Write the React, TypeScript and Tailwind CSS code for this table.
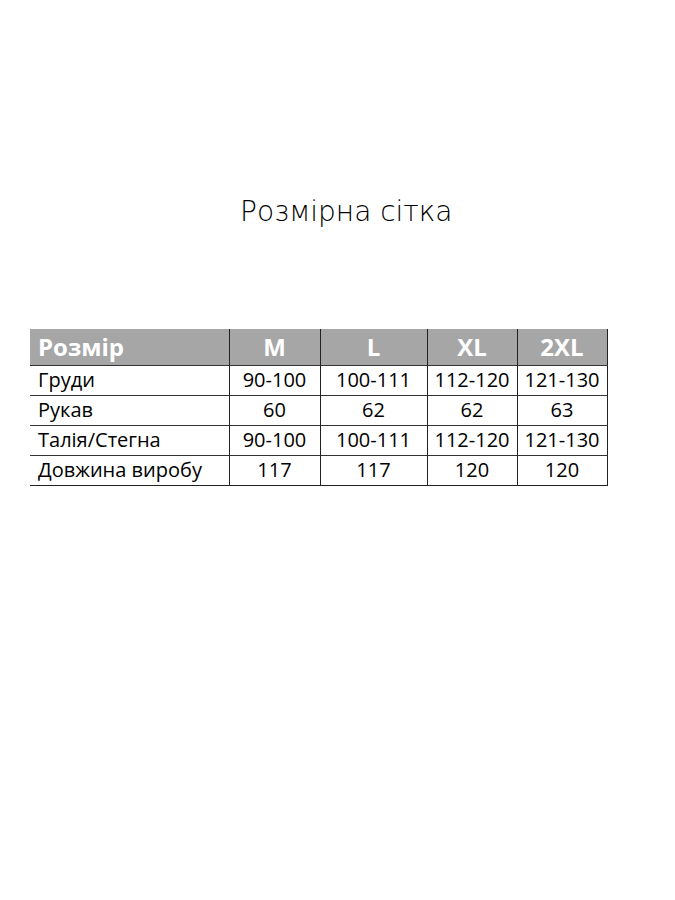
const columns = ['M', 'L', 'XL', '2XL']

const rows = [
  { name: 'Груди', values: ['90-100', '100-111', '112-120', '121-130'] },
  { name: 'Рукав', values: ['60', '62', '62', '63'] },
  { name: 'Талія/Стегна', values: ['90-100', '100-111', '112-120', '121-130'] },
  { name: 'Довжина виробу', values: ['117', '117', '120', '120'] },
]

const widths = ['w-[91px]', 'w-[107px]', 'w-[90px]', 'w-[90px]']

export default function App() {
  return (
    <div className="min-h-[900px] w-[675px] bg-white font-['Open_Sans',sans-serif] text-black">
      <h1 className="pt-[195px] pl-[240px] font-['DejaVu_Sans',sans-serif] text-[28px] font-extralight leading-[34px] text-black">
        Розмірна сітка
      </h1>

      <table className="mt-[100px] ml-[30px] border-collapse border-r border-b border-[#222]">
        <thead>
          <tr className="h-[36px] bg-[#a6a6a6] text-[24px] leading-none font-bold text-white">
            <th className="w-[199px] pl-[8px] text-left">Розмір</th>
            {columns.map((col, i) => (
              <th key={col} className={`${widths[i]} border-l border-[#222] text-center`}>
                {col}
              </th>
            ))}
          </tr>
        </thead>
        <tbody className="text-[20px] leading-none">
          {rows.map((row) => (
            <tr key={row.name} className="h-[30px] border-t border-[#333]">
              <td className="pl-[8px] text-left">{row.name}</td>
              {row.values.map((value, i) => (
                <td key={i} className="border-l border-[#222] text-center">
                  {value}
                </td>
              ))}
            </tr>
          ))}
        </tbody>
      </table>
    </div>
  )
}
